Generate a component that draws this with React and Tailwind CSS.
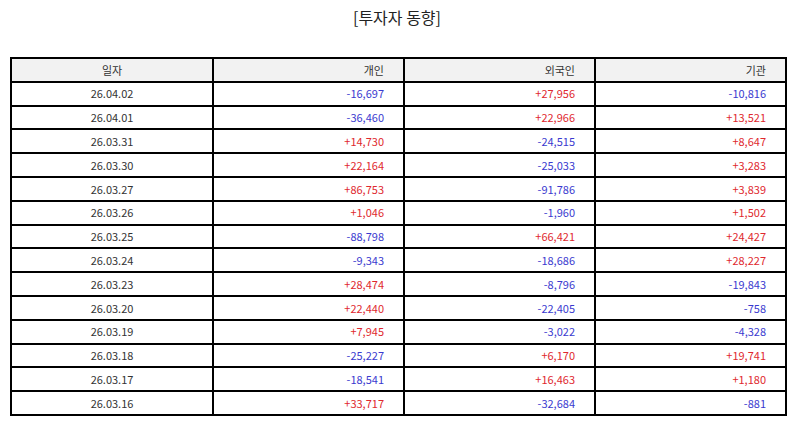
const rows = [
  ["26.04.02", "-16,697", "+27,956", "-10,816"],
  ["26.04.01", "-36,460", "+22,966", "+13,521"],
  ["26.03.31", "+14,730", "-24,515", "+8,647"],
  ["26.03.30", "+22,164", "-25,033", "+3,283"],
  ["26.03.27", "+86,753", "-91,786", "+3,839"],
  ["26.03.26", "+1,046", "-1,960", "+1,502"],
  ["26.03.25", "-88,798", "+66,421", "+24,427"],
  ["26.03.24", "-9,343", "-18,686", "+28,227"],
  ["26.03.23", "+28,474", "-8,796", "-19,843"],
  ["26.03.20", "+22,440", "-22,405", "-758"],
  ["26.03.19", "+7,945", "-3,022", "-4,328"],
  ["26.03.18", "-25,227", "+6,170", "+19,741"],
  ["26.03.17", "-18,541", "+16,463", "+1,180"],
  ["26.03.16", "+33,717", "-32,684", "-881"],
];

function Num({ v }) {
  const color = v.startsWith("-") ? "text-[#3a3acf]" : "text-[#e0282e]";
  return (
    <td className={`border-2 border-black text-right pr-[19px] ${color}`}>{v}</td>
  );
}

export default function App() {
  return (
    <div
      className="w-[794px] h-[425px] bg-white text-[#333]"
      style={{ fontFamily: '"Noto Sans CJK KR", "Noto Sans", sans-serif' }}
    >
      <h1 className="text-[16px] leading-none text-center pt-[9px] text-[#222]">
        [투자자 동향]
      </h1>
      <table className="ml-[10px] mt-[32px] w-[775px] border-collapse border-2 border-black text-[11px] table-fixed">
        <colgroup>
          <col className="w-[202px]" />
          <col className="w-[191px]" />
          <col className="w-[191px]" />
          <col className="w-[191px]" />
        </colgroup>
        <thead>
          <tr className="h-[23.8px] bg-[#f2f2f2]">
            <th className="border-2 border-black font-normal text-center">일자</th>
            <th className="border-2 border-black font-normal text-right pr-[19px]">개인</th>
            <th className="border-2 border-black font-normal text-right pr-[19px]">외국인</th>
            <th className="border-2 border-black font-normal text-right pr-[19px]">기관</th>
          </tr>
        </thead>
        <tbody>
          {rows.map((r) => (
            <tr key={r[0]} className="h-[23.8px]">
              <td className="border-2 border-black text-center">{r[0]}</td>
              <Num v={r[1]} />
              <Num v={r[2]} />
              <Num v={r[3]} />
            </tr>
          ))}
        </tbody>
      </table>
    </div>
  );
}
